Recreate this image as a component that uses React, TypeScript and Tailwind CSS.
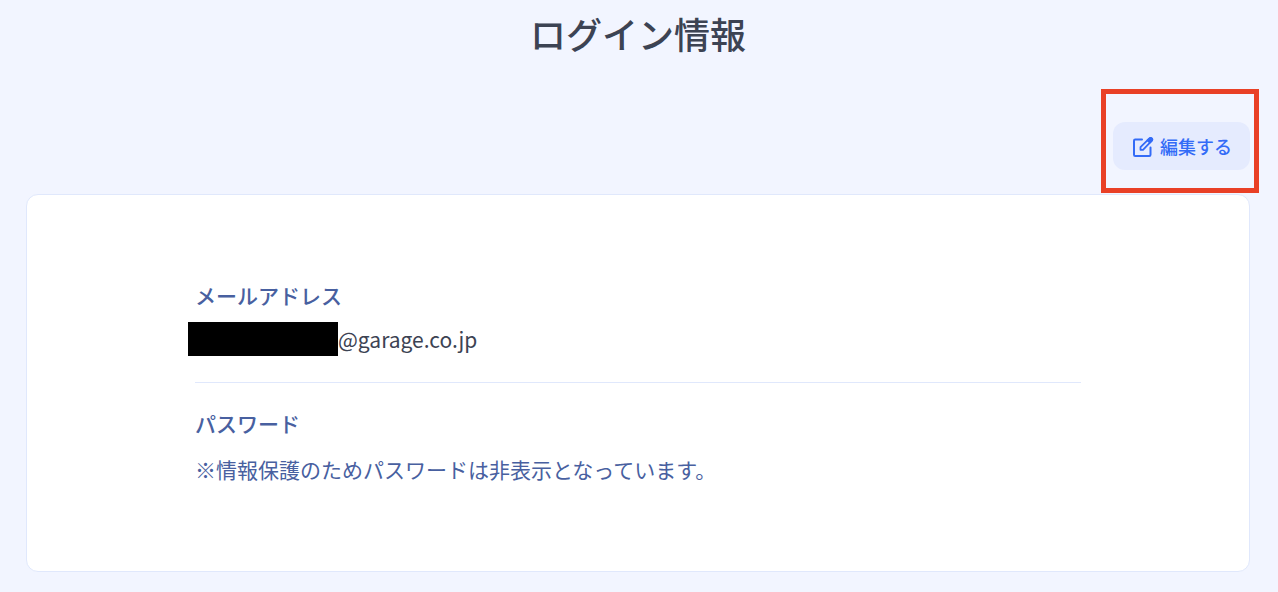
function EditIcon() {
  return (
    <svg
      viewBox="0 0 22 22"
      className="mt-0.5 size-[22px] shrink-0"
      fill="none"
      stroke="currentColor"
      strokeWidth="2"
      strokeLinecap="round"
      strokeLinejoin="round"
      aria-hidden="true"
    >
      <path d="M10 3.500H3.200Q2 3.500 2 4.700V18.800Q2 20 3.200 20H17.300Q18.500 20 18.500 18.800V11.500" />
      <path d="M8.500 13.800V11.200L17.200 2.600Q18.600 1.300 19.700 2.300Q20.900 3.400 19.600 4.900L11 13.800Z" strokeWidth="1.800" />
      <path d="M15.400 4.400L17.200 2.600Q18.600 1.300 19.700 2.300Q20.900 3.400 19.600 4.900L17.900 6.700Z" fill="currentColor" strokeWidth="1.800" />
    </svg>
  );
}

function EditButton() {
  return (
    <div className="relative">
      <button
        type="button"
        className="flex h-12 items-center gap-1.5 rounded-xl bg-[#e5ebfe] pl-[19px] pr-[18px] text-lg font-medium text-[#336bf7]"
      >
        <EditIcon />
        編集する
      </button>
      <div className="pointer-events-none absolute -left-3 -right-[9px] -bottom-[23px] -top-[33px] border-5 border-[#e94026]"></div>
    </div>
  );
}

export default function App() {
  return (
    <main className="min-h-screen bg-[#f2f5ff] pl-[26px] pr-7 pt-2 pb-5 font-['Noto_Sans_CJK_JP',sans-serif]">
      <h1 className="text-center text-4xl leading-[50px] font-medium text-[#3c4353]">
        ログイン情報
      </h1>
      <div className="mt-16 flex justify-end">
        <EditButton />
      </div>
      <section className="mt-6 rounded-xl border border-[#e0e8fc] bg-white px-[168px] pt-[84px] pb-[86px] text-[21px] leading-8 text-[#4860a0]">
        <dl>
          <div className="border-b border-[#e0e8fc] pb-[26px]">
            <dt className="font-medium">メールアドレス</dt>
            <dd className="mt-[11px] -ml-[7px] flex items-center text-[#3c4353]">
              <span className="h-[34px] w-[150px] bg-black"></span>
              @garage.co.jp
            </dd>
          </div>
          <div className="pt-6">
            <dt className="font-medium">パスワード</dt>
            <dd className="mt-[14px]">
              ※情報保護のためパスワードは非表示となっています。
            </dd>
          </div>
        </dl>
      </section>
    </main>
  );
}
